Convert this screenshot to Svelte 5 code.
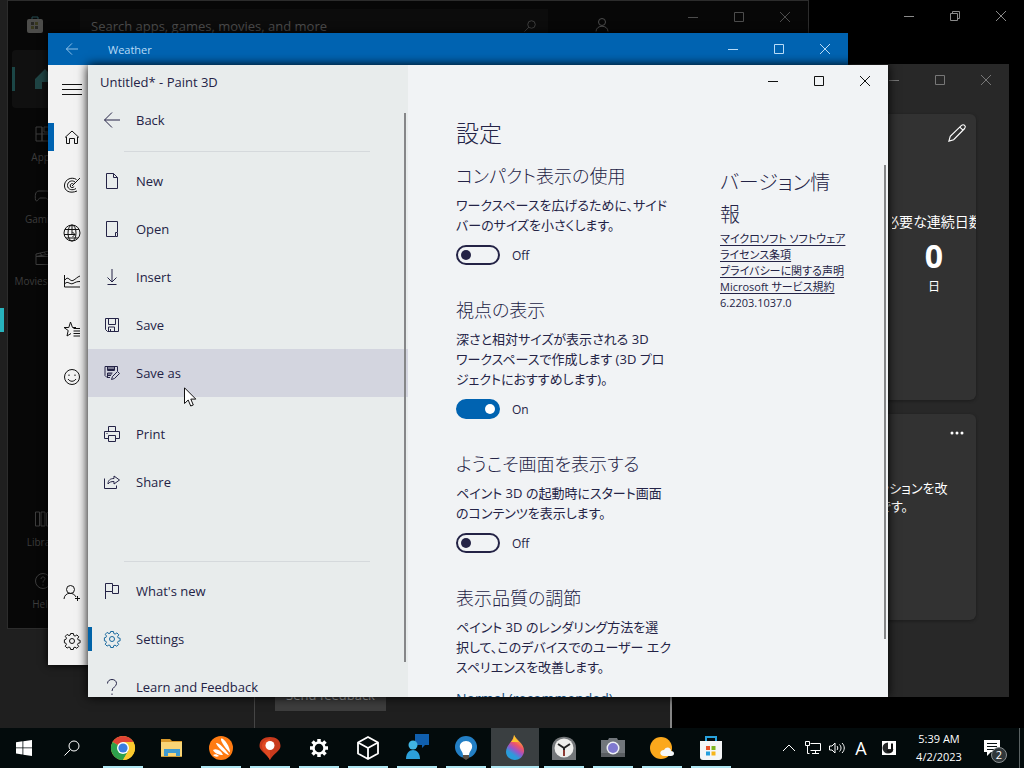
<script lang="ts">
    // line icons, drawn on a 16 x 16 grid unless noted
    const icons: Record<string, string> = {
        min: '<path d="M3 8.5h10"/>',
        max: '<path d="M3.5 3.5h9v9h-9z"/>',
        restore: '<path d="M3.500 5.500h7v7h-7zM5.500 5.500v-2h7v7h-2"/>',
        close: '<path d="M3 3l10 10M13 3L3 13"/>',
        back: '<path d="M0.500 8H16M8 0.500L0.500 8L8 15.500"/>',
        doc: '<path d="M2.500 .5h7l4 4v11h-11zM9.500 .5v4h4"/>',
        open: '<path d="M13.500 11V.5h-11v15h9M11.500 15.500v-4h2v4z"/>',
        insert: '<path d="M8 0v13M3.500 8.500L8 13l4.500-4.500M3.500 15.500h9"/>',
        save: '<path d="M1.500 1.500h13v13h-11l-2-2zM4.500 1.500v6h7v-6M4.500 14v-4h6v4M6.500 14v-2"/>',
        saveAs: '<path d="M6 12.500H3l-2-2v-9h12.500V6M3.500 1.500v4h7v-4M3.500 12V8h5"/><path d="M4 3h6M4 4.500h6M4 9h4M4 10.500h3"/><path d="M7.500 14.500l1-3 5-5 2 2-5 5z"/>',
        print: '<path d="M4.500 5.500v-5h7v5M4 12.500H.5v-7h15v7H12M4.500 9.500h7v6h-7zM2.500 7.500h1"/>',
        share: '<path d="M.5 4.500v10h12v-3M4 10c0-4 2.500-5.500 6-5.500V2l5.500 4L10 10V7.500C7 7.500 5.500 8 4 10z"/>',
        flag: '<path d="M1.500 16V.5h7v8h-7M8.500 2.500h6v8h-6v-2"/>',
        gear: '<circle cx="8" cy="8" r="2.500"/><path d="M6.600 .5h2.800l.4 2 1.300.6 1.800-1.200 1.900 1.900-1.200 1.800.6 1.300 1.900.4v2.500l-2 .5-.6 1.300 1.200 1.800-1.900 1.900-1.800-1.200-1.300.6-.4 1.800H6.600l-.4-1.900-1.300-.6-1.800 1.100-1.900-1.900 1.200-1.700-.5-1.300-1.500-.4V6.800l1.500-.4.6-1.300-1.200-1.800 1.800-1.900 1.900 1.200 1.200-.6z"/>',
        help: '<path d="M3.500 4.500C3.500 2 5.500.5 8 .5s4.500 1.500 4.500 4C12.500 8 8 8 8 12M8 14.500V16"/>',
        menu: '<path d="M-2 3.500h20M-2 8.500h20M-2 13.500h20"/>',
        home: '<path d="M1 8.500L8 2l7 6.500M2.500 8v6.500h3v-5h5v5h3V8"/>',
        radar: '<path d="M12.500 2.500C8 -.5 1 2 .5 8s5.500 9 12.500 6M11 5C8 2.500 3.500 4.500 3.500 8.500c0 4 5 5.500 8.500 3M9.500 7C8 5.800 6 7 6.200 9c.3 2 2.800 2 4 .5M8 9l8-8"/>',
        globe: '<circle cx="8" cy="8" r="8"/><ellipse cx="8" cy="8" rx="4" ry="8"/><path d="M1 4.500h14M0 9.500h11M2 13h12M8 0v9M8.500 7l2.500 2.500L8.500 12"/>',
        chart: '<path d="M.5 2v12H16M1 7c3-5 5 2 8 .5S13 4 16 3M1 10.500c3-3 5 1.500 8 0s4-2 7-2"/>',
        fav: '<path d="M7 12.500L3 15l1.200-5.500L0 6.500h4.800L6.500 1l2 5.500H12M9.500 7.500H16M9.500 10H16M9.500 12.500H16M9.500 15H16"/>',
        smile: '<circle cx="8" cy="8" r="7.500"/><path d="M4 10c2 3 6 3 8 0M5 5.500v1.500M11 5.500v1.500"/>',
        person: '<circle cx="6.500" cy="4.500" r="4"/><path d="M0 14c.5-7 9.500-7.500 12 -2M13.500 11v5M11 13.500h5"/>',
        user: '<circle cx="8" cy="5" r="3.500"/><path d="M2 14.500c0-7 12-7 12 0"/>',
        search: '<circle cx="10" cy="6" r="5"/><path d="M6.500 9.500L.5 15.500"/>',
        apps: '<path d="M1 1h6v14H1zM7 1v14M1 8h14V15H7M9 1h6v5H9z"/>',
        game: '<path d="M4 3h8c4 0 4 5 3.500 9-2 3-3-2-4.500-2H5c-1.500 0-2.500 5-4.500 2C0 8 0 3 4 3z"/>',
        movie: '<path d="M1 6.500h14v8H1zM1 6.500V4l13-3 .5 3L1 6.500M5 3l1.500 2M9 2l1.500 2"/>',
        library: '<path d="M.5 1h4v14h-4zM6 1h4v14H6zM11.500 2l3-1v14h-3z"/>',
        helpRound: '<circle cx="8" cy="8" r="7.500"/><path d="M6 6c0-3 4.500-2.500 4 0-.3 1.500-2 1.500-2 3.500M8 11.500v1"/>',
        pencil: '<path d="M.8 15.200L2 11 12 1.200c2-1.500 4.500.8 2.800 2.800L5 14zM10.500 2.700l2.800 2.800"/>',
        chevron: '<path d="M2 11l6-6 6 6"/>',
        network: '<path d="M5.500 3.500h10v7h-10M.5 1.500h4v4h-4zM2.500 5.500v8h2M10.500 10.500v3M7 13.500h7"/>',
        volume: '<path d="M.5 6v4h2.500l3 3V3L3 6zM8 6c1 1 1 3 0 4M10.500 4.500c2 2 2 5 0 7M13 3c3 3 3 7 0 10"/>',
        ime: '<rect x="1" y="1" width="14" height="14" fill="#fff" stroke="none"/><circle cx="7" cy="8" r="5.500" fill="#26292a" stroke="none"/><path d="M7 2h8v7H7z" fill="#fff" stroke="none"/><path d="M11 3.500v6c0 3-4 3-4.500 .5" stroke="#111" stroke-width="2"/>',
    }

    // coloured taskbar icons, 24 x 24
    const appIcons: Record<string, string> = {
        chrome: '<circle cx="12" cy="12" r="12" fill="#fbc92e"/><path d="M12 12L1.600 6a12 12 0 0 1 20.800 0z" fill="#df4335"/><path d="M12 12L1.600 6A12 12 0 0 0 12 24l5.200-9z" fill="#2da14c"/><path d="M12 6h10.400A12 12 0 0 1 12 24l5.200-9z" fill="#fbc92e"/><circle cx="12" cy="12" r="6" fill="#fff"/><circle cx="12" cy="12" r="4.600" fill="#3a7de0"/>',
        folder: '<path d="M1 3h9l2 2h10v5H1z" fill="#d99a2b"/><path d="M1 6h21v14H1z" fill="#f9d576"/><path d="M4 20v-7h16v7h-4v-3H8v3z" fill="#3f9bd0"/><path d="M1 20h21v1H1z" fill="#c99b38"/>',
        avast: '<circle cx="12" cy="12" r="12" fill="#ff7b12"/><path d="M12 2.500c3-1 9 8 9 14-2-1-10-11-9-14z" fill="#fff"/><path d="M7 7c2-1 9 5 13 12-3 0-12-8-13-12z" fill="#fff"/><path d="M4 14c3-2 8 0 10 5-4 0-9-2-10-5z" fill="#fff"/><path d="M4 19c2-1 4-1 6 1-2 1-4 1-6-1z" fill="#fff"/>',
        pin: '<path d="M12 24C8 17 1.500 15 1.500 10 1.500 4 6 1 12 1s10.500 3 10.500 9C22.500 15 16 17 12 24z" fill="#c83a1d"/><path d="M12 24C10 19 4 16 4 10c0-3 3-7 8-7z" fill="#e04922"/><circle cx="12" cy="9.500" r="4.500" fill="#fff"/>',
        cog: '<circle cx="12" cy="12" r="5.500" fill="none" stroke="#fff" stroke-width="2.500"/><path d="M12 6V3M12 18v3M6 12H3M18 12h3M7.800 7.800L5.500 5.500M16.200 16.200l2.300 2.300M7.800 16.200l-2.300 2.300M16.200 7.800l2.300-2.300" stroke="#fff" stroke-width="3.500"/>',
        cube: '<path d="M12 1l10 5.500v11L12 23 2 17.500v-11zM2 6.500l10 5.500 10-5.500M12 12v11" fill="none" stroke="#fff" stroke-width="1.800" stroke-linejoin="round"/>',
        feedback: '<path d="M10-2h14V9h-4l-3 3V9h-7z" fill="#105fae"/><circle cx="8" cy="9" r="4.500" fill="#41b5e4"/><path d="M1 23c0-12 14-12 14 0z" fill="#2ca0da"/>',
        bulb: '<circle cx="12" cy="11" r="11" fill="#237fc5"/><path d="M12 5c-4 0-7 3-6 7 .5 2 3 4 3 7h6c0-3 2.500-5 3-7 1-4-2-7-6-7z" fill="#fff"/><path d="M9 19h6v3l-3 2-3-2z" fill="#5b5147"/>',
        paint: '<defs><linearGradient id="drop" x1="0.800" y1="0" x2="0.300" y2="1"><stop offset="0.150" stop-color="#ffb62e"/><stop offset="0.400" stop-color="#ef5268"/><stop offset="0.600" stop-color="#9a55c9"/><stop offset="0.800" stop-color="#2a9cdb"/></linearGradient></defs><path d="M11-1c3 6 11 9 10 17-1 5-5 8-9 8s-9-3-9-8C3 9 10 6 11-1z" fill="url(#drop)"/><path d="M11-1c1 3 3 5 5 7L8 6c2-2 3-4 3-7z" fill="#fac52d"/>',
        clock: '<path d="M0 24V12C0-3 24-3 24 12v12z" fill="#74777a"/><circle cx="12" cy="12" r="9.500" fill="#eeeeec"/><path d="M12 12L6 8M12 12l6-4M12 12v3" stroke="#222" stroke-width="2"/><path d="M12 14v6" stroke="#8d3a34" stroke-width="2"/>',
        camera: '<path d="M2 4h5l1-2h8l1 2h7v17H0V4z" fill="#71767b"/><path d="M0 17h24v4H0z" fill="#5a5e62"/><circle cx="12" cy="12" r="6.500" fill="#eef0f5"/><circle cx="12" cy="12" r="5" fill="#8079cf"/>',
        weather: '<circle cx="11" cy="12" r="11" fill="#fba81c"/><path d="M14 20c-5 0-5-6 0-6 2-4 7-3 7 1 4 0 4 5 0 5z" fill="#f5f7f9"/>',
        store: '<path d="M7 6V1h10v5" fill="none" stroke="#28a2dd" stroke-width="2"/><path d="M1 5h22v16q0 3-3 3H4q-3 0-3-3z" fill="#f4f6f7"/><path d="M7 10h4v4H7z" fill="#e8532c"/><path d="M12.500 10h4v4h-4z" fill="#7db51f"/><path d="M7 15.500h4v4H7z" fill="#259fdd"/><path d="M12.500 15.500h4v4h-4z" fill="#f7b61a"/>',
    }

    const taskbar = [
        { name: 'Chrome', icon: 'chrome', running: true },
        { name: 'File Explorer', icon: 'folder', running: false },
        { name: 'Avast', icon: 'avast', running: true },
        { name: 'Maps', icon: 'pin', running: true },
        { name: 'Settings', icon: 'cog', running: true },
        { name: '3D Viewer', icon: 'cube', running: true },
        { name: 'Feedback Hub', icon: 'feedback', running: true },
        { name: 'Tips', icon: 'bulb', running: true },
        { name: 'Paint 3D', icon: 'paint', running: true },
        { name: 'Clock', icon: 'clock', running: true },
        { name: 'Camera', icon: 'camera', running: true },
        { name: 'Weather', icon: 'weather', running: true },
        { name: 'Microsoft Store', icon: 'store', running: true },
    ]

    const menuGroups = [
        [{ label: 'Back', icon: 'back' }],
        [
            { label: 'New', icon: 'doc' },
            { label: 'Open', icon: 'open' },
            { label: 'Insert', icon: 'insert' },
            { label: 'Save', icon: 'save' },
            { label: 'Save as', icon: 'saveAs' },
        ],
        [
            { label: 'Print', icon: 'print' },
            { label: 'Share', icon: 'share' },
        ],
        [
            { label: "What's new", icon: 'flag' },
            { label: 'Settings', icon: 'gear' },
            { label: 'Learn and Feedback', icon: 'help' },
        ],
    ]

    let options = $state([
        {
            title: 'コンパクト表示の使用',
            lines: ['ワークスペースを広げるために、サイド', 'バーのサイズを小さくします。'],
            on: false,
        },
        {
            title: '視点の表示',
            lines: ['深さと相対サイズが表示される 3D', 'ワークスペースで作成します (3D プロ', 'ジェクトにおすすめします)。'],
            on: true,
        },
        {
            title: 'ようこそ画面を表示する',
            lines: ['ペイント 3D の起動時にスタート画面', 'のコンテンツを表示します。'],
            on: false,
        },
    ])

    const storeTop = [
        { label: 'Apps', icon: 'apps' },
        { label: 'Gaming', icon: 'game' },
        { label: 'Movies & TV', icon: 'movie' },
    ]
    const storeBottom = [
        { label: 'Library', icon: 'library' },
        { label: 'Help', icon: 'helpRound' },
    ]
    const weatherTop = ['menu', 'home', 'radar', 'globe', 'chart', 'fav', 'smile']
    const weatherBottom = ['person', 'gear']
</script>

{#snippet icon(name: string, size = 16)}
    <svg class="icon" width={size} height={size} viewBox="0 0 16 16" aria-hidden="true">{@html icons[name]}</svg>
{/snippet}

{#snippet controls(middle = 'max')}
    <div class="controls">
        <button aria-label="Minimize">{@render icon('min')}</button>
        <button aria-label="Maximize">{@render icon(middle)}</button>
        <button aria-label="Close">{@render icon('close')}</button>
    </div>
{/snippet}

{#snippet storeItem(item: { label: string, icon: string })}
    <button class="store-item">
        {@render icon(item.icon)}
        <span>{item.label}</span>
    </button>
{/snippet}

<div class="screen">
    <main class="desktop">
        <section class="window hub" aria-label="Feedback Hub">
            <div class="hub-nav"></div>
            <div class="hub-pane">
                <button class="send">Send feedback</button>
            </div>
            <div class="hub-rest">{@render controls('restore')}</div>
        </section>

        <section class="window store" aria-label="Microsoft Store">
            <header>
                <svg class="store-logo" width="18" height="18" viewBox="0 0 18 18">
                    <path d="M6 3V1h6v2" fill="none" stroke="#244a50" />
                    <rect x="1" y="3" width="16" height="14" rx="2" fill="#4c4c4a" />
                    <path d="M5 6h3v3H5zM9 10h3v3H9z" fill="#272724" />
                    <path d="M9 6h3v3H9zM5 10h3v3H5z" fill="#39391e" />
                </svg>
                <label class="store-search">
                    <input type="text" aria-label="Search" placeholder="Search apps, games, movies, and more" />
                    {@render icon('search', 12)}
                </label>
                <button class="account" aria-label="Account">{@render icon('user')}</button>
                {@render controls()}
            </header>
            <nav>
                <button class="store-home" aria-label="Home">
                    <svg width="20" height="20" viewBox="0 0 20 20"><path d="M0 10L10 0l10 10v10h-7v-7H7v7H0z" fill="#1f4444" /></svg>
                </button>
                {#each storeTop as item}
                    {@render storeItem(item)}
                {/each}
                <div class="grow"></div>
                {#each storeBottom as item}
                    {@render storeItem(item)}
                {/each}
            </nav>
        </section>

        <section class="window habit" aria-label="Clock">
            {@render controls()}
            <div class="card tall">
                <button class="corner" aria-label="Edit">{@render icon('pencil', 18)}</button>
                <div class="streak">
                    <div class="clip"><span>必要な連続日数</span></div>
                    <strong>0</strong>
                    <span>日</span>
                </div>
            </div>
            <div class="card">
                <button class="corner" aria-label="More">
                    <svg width="14" height="4" viewBox="0 0 14 4"><circle cx="2" cy="2" r="1.500" /><circle cx="7" cy="2" r="1.500" /><circle cx="12" cy="2" r="1.500" /></svg>
                </button>
                <p>ッションを改<br />です。</p>
            </div>
        </section>

        <section class="window weather" aria-label="Weather">
            <header>
                <button class="weather-back" aria-label="Back">{@render icon('back', 12)}</button>
                <span class="weather-title">Weather</span>
                {@render controls()}
            </header>
            <nav>
                {#each weatherTop as name}
                    <button class={{ current: name === 'home' }} aria-label={name}>{@render icon(name)}</button>
                {/each}
                <div class="grow"></div>
                {#each weatherBottom as name}
                    <button aria-label={name}>{@render icon(name)}</button>
                {/each}
            </nav>
        </section>

        <section class="window paint" aria-label="Paint 3D">
            <aside>
                <div class="paint-title">Untitled* - Paint 3D</div>
                <nav>
                    {#each menuGroups as group, i}
                        <div class={['group', `group-${i}`]}>
                            {#each group as item}
                                <button class={['item', { hover: item.label === 'Save as', selected: item.label === 'Settings' }]}>
                                    {@render icon(item.icon)}
                                    {item.label}
                                </button>
                            {/each}
                        </div>
                    {/each}
                </nav>
                <div class="thumb side-thumb"></div>
            </aside>
            <div class="page">
                {@render controls()}
                <div class="columns">
                    <div class="options">
                        <h1>設定</h1>
                        {#each options as option}
                            <section>
                                <h2>{option.title}</h2>
                                <p>{#each option.lines as line, i}{#if i}<br />{/if}{line}{/each}</p>
                                <label class="toggle">
                                    <input type="checkbox" role="switch" bind:checked={option.on} />
                                    {option.on ? 'On' : 'Off'}
                                </label>
                            </section>
                        {/each}
                        <section>
                            <h2>表示品質の調節</h2>
                            <p>ペイント 3D のレンダリング方法を選<br />択して、このデバイスでのユーザー エク<br />スペリエンスを改善します。</p>
                            <button class="quality">Normal (recommended)</button>
                        </section>
                    </div>
                    <div class="about">
                        <h2>バージョン情<br />報</h2>
                        <a href="#license">マイクロソフト ソフトウェア<br />ライセンス条項</a>
                        <a href="#privacy">プライバシーに関する声明</a>
                        <a href="#terms">Microsoft サービス規約</a>
                        <span>6.2203.1037.0</span>
                    </div>
                </div>
                <div class="thumb page-thumb"></div>
            </div>
        </section>

        <svg class="cursor" width="13" height="20" viewBox="0 0 13 20">
            <path d="M.5 .8v15.700l3.700-3.500 2.500 6 2.600-1-2.500-5.900h5z" fill="#fff" stroke="#111" />
        </svg>
    </main>

    <footer class="taskbar">
        <button aria-label="Start">
            <svg width="16" height="16" viewBox="0 0 16 16"><path d="M0 2.300l6.500-1v6.200H0zM7.300 1.200L16 0v7.500H7.300zM0 8.300h6.500v6.300l-6.500-1zM7.300 8.300H16V16l-8.700-1.300z" fill="#fff" /></svg>
        </button>
        <button class="find" aria-label="Search">{@render icon('search')}</button>
        {#each taskbar as app}
            <button class={['app', { running: app.running, active: app.icon === 'paint' }]} aria-label={app.name}>
                <svg class="app-icon" width="24" height="24" viewBox="0 0 24 24">{@html appIcons[app.icon]}</svg>
            </button>
        {/each}
        <div class="tray">
            <button aria-label="Hidden icons">{@render icon('chevron')}</button>
            <button aria-label="Network">{@render icon('network')}</button>
            <button aria-label="Volume">{@render icon('volume')}</button>
            <button class="lang">A</button>
            <button class="ime" aria-label="Input mode">{@render icon('ime')}</button>
            <button class="time"><span>5:39 AM</span><span>4/2/2023</span></button>
            <button class="notes" aria-label="Notifications">
                <svg width="16" height="16" viewBox="0 0 16 16"><path d="M0 0h16v12H7l-4 4v-4H0z" fill="#fff" /><path d="M3 3.500h10M3 6.500h10M3 9.500h7" stroke="#061011" /></svg>
                <span class="badge">2</span>
            </button>
            <div class="peek"></div>
        </div>
    </footer>
</div>

<style>
    :global(body) {
        margin: 0;
        background: #000;
    }

    .screen {
        display: flex;
        flex-direction: column;
        height: 100vh;
        min-height: 480px;
        overflow: hidden;
        font-family: "Open Sans", "Noto Sans CJK JP", sans-serif;
        font-feature-settings: "palt";
        font-size: 13px;
        color: #fff;
    }

    button, input {
        font: inherit;
        font-feature-settings: inherit;
        color: inherit;
        background: none;
        border: 0;
        padding: 0;
        margin: 0;
    }

    button {
        display: flex;
        align-items: center;
        justify-content: center;
    }

    h1, h2 {
        margin: 0;
        font-weight: 300;
    }

    p {
        margin: 0;
    }

    .icon {
        flex: none;
        fill: none;
        stroke: currentColor;
        overflow: visible;
    }

    .grow {
        flex: 1;
    }

    .desktop {
        position: relative;
        flex: 1;
        min-height: 0;
        background: #000;
    }

    .window {
        position: absolute;
        display: flex;
        box-sizing: border-box;
        overflow: hidden;
    }

    .controls {
        display: flex;
        justify-content: flex-end;
        height: 32px;
        margin-left: auto;
    }

    .controls button {
        width: 46px;
        height: 32px;
    }

    /* maximized window behind everything */
    .hub {
        inset: 0;
    }

    .hub-nav {
        width: 255px;
        flex: none;
        box-sizing: border-box;
        background: linear-gradient(#27b3bd, #27b3bd) 0 308px / 4px 24px no-repeat, #1f1f1f;
        border-right: 1px solid #454545;
    }

    .hub-pane {
        display: flex;
        align-items: flex-end;
        flex: 9 1 0;
        box-sizing: border-box;
        padding: 0 0 17px 20px;
        background: #1f1f1f;
        border-right: 2px solid #858585;
    }

    .hub-rest {
        flex: 8 1 0;
        color: #8a8a8a;
    }

    .send {
        width: 111px;
        height: 32px;
        background: #3d3d3d;
        color: #aaa;
    }

    .store {
        inset: 0 215px 99px 7px;
        flex-direction: column;
        background: #070707;
        border: 1px solid #2c2c2c;
        color: #4c4c4c;
    }

    .store header {
        display: flex;
        align-items: flex-start;
        height: 49px;
        flex: none;
    }

    .store-logo {
        margin: 15px 0 0 18px;
    }

    .store-search {
        display: flex;
        align-items: center;
        flex: 0 1 468px;
        height: 34px;
        box-sizing: border-box;
        margin: 8px 0 0 36px;
        padding: 0 12px 0 11px;
        background: #0c0c0c;
    }

    .store-search input {
        flex: 1;
        min-width: 0;
    }

    .store-search input::placeholder {
        color: #4c4c4c;
    }

    .account {
        margin: 16px 0 0 46px;
    }

    .store nav {
        display: flex;
        flex: 1;
        flex-direction: column;
        width: 70px;
        padding-bottom: 5px;
        font-size: 10px;
        color: #3c3c3c;
    }

    .store-home {
        width: 66px;
        height: 58px;
        margin: 0 0 6px 4px;
        border-radius: 4px;
        background: linear-gradient(#1b4646, #1b4646) 0 50% / 3px 24px no-repeat, #101010;
    }

    .store-item {
        flex-direction: column;
        gap: 8px;
        height: 62px;
        white-space: nowrap;
    }

    .habit {
        inset: 64px 15px 31px 209px;
        flex-direction: column;
        background: #282828;
        color: #fff;
    }

    .habit .controls {
        height: 50px;
        flex: none;
        color: #777;
    }

    .card {
        align-self: flex-end;
        position: relative;
        width: 300px;
        flex: 0 1 206px;
        margin: 0 33px 14px 0;
        border-radius: 6px;
        background: #323232;
        box-shadow: 0 1px 3px #1c1c1c;
    }

    .card.tall {
        flex-basis: 286px;
    }

    .corner {
        position: absolute;
        top: 10px;
        right: 10px;
        width: 18px;
        height: 18px;
        fill: #fff;
    }

    .streak {
        display: flex;
        flex-direction: column;
        align-items: center;
        width: 84px;
        margin: 97px 0 0 auto;
    }

    .clip {
        display: flex;
        justify-content: center;
        width: 84px;
        overflow: hidden;
        white-space: nowrap;
        font-size: 14px;
        line-height: 22px;
    }

    .streak strong {
        font-size: 32px;
        line-height: 46px;
    }

    .streak > span {
        font-size: 12px;
        line-height: 16px;
    }

    .card p {
        width: 97px;
        margin: 65px 0 0 auto;
        line-height: 18px;
    }

    .weather {
        inset: 33px 176px 63px 48px;
        flex-direction: column;
        background: #f2f2f2;
        color: #111;
        box-shadow: 0 0 8px #000;
    }

    .weather header {
        display: flex;
        align-items: center;
        height: 32px;
        flex: none;
        background: #0063b1;
        color: #b9dcf7;
        font-size: 11px;
    }

    .weather-back {
        width: 48px;
    }

    .weather-title {
        margin-left: 12px;
    }

    .weather nav {
        display: flex;
        flex: 1;
        flex-direction: column;
        width: 48px;
    }

    .weather nav button {
        height: 48px;
    }

    .current {
        background: linear-gradient(#0063b1, #0063b1) 0 50% / 6px 28px no-repeat;
    }

    .paint {
        inset: 65px 136px 31px 88px;
        background: #f1f3f5;
        color: #242346;
        box-shadow: 0 0 10px #000;
    }

    aside {
        position: relative;
        width: 320px;
        flex: none;
        background: #e8ecec;
    }

    .paint-title {
        height: 31px;
        padding-left: 12px;
        line-height: 34px;
    }

    .item {
        justify-content: flex-start;
        gap: 16px;
        width: 100%;
        height: 48px;
        padding-left: 16px;
    }

    .group + .group {
        padding-top: 13px;
    }

    .group-1, .group-3 {
        background: linear-gradient(#d5d9dc, #d5d9dc) 36px 7px / 246px 1px no-repeat;
    }

    .group-3 {
        margin-top: 48px;
    }

    .hover {
        background: #d3d5df;
    }

    .selected {
        background: linear-gradient(#0063a8, #0063a8) 0 50% / 4px 24px no-repeat;
    }

    .selected .icon {
        color: #17689e;
    }

    .thumb {
        position: absolute;
        right: 2px;
        width: 2px;
        background: #858688;
    }

    .side-thumb {
        top: 48px;
        bottom: 35px;
    }

    .page-thumb {
        top: 100px;
        bottom: 58px;
    }

    .page {
        position: relative;
        flex: 1;
        min-width: 0;
    }

    .page .controls {
        color: #111;
    }

    .columns {
        display: flex;
        gap: 48px;
        padding: 20px 0 0 48px;
        white-space: nowrap;
    }

    .options {
        width: 216px;
        flex: none;
    }

    .options h1 {
        font-size: 23px;
        line-height: 32px;
        margin-bottom: 15px;
    }

    .options h2 {
        font-size: 18px;
        line-height: 24px;
        margin-bottom: 7px;
    }

    .options p {
        line-height: 20px;
        margin-bottom: 10px;
    }

    .options section {
        margin-bottom: 33px;
    }

    .toggle {
        display: flex;
        align-items: center;
        gap: 12px;
        height: 20px;
        font-size: 12px;
    }

    .toggle input {
        appearance: none;
        display: flex;
        align-items: center;
        width: 44px;
        height: 20px;
        box-sizing: border-box;
        padding: 0 3px;
        border: 2px solid #242346;
        border-radius: 10px;
    }

    .toggle input::before {
        content: "";
        width: 10px;
        height: 10px;
        border-radius: 50%;
        background: #242346;
    }

    .toggle input:checked {
        justify-content: flex-end;
        border-color: #0063b1;
        background: #0063b1;
    }

    .toggle input:checked::before {
        background: #fff;
    }

    .quality {
        color: #17507e;
        font-size: 14px;
        line-height: 24px;
    }

    .about {
        display: flex;
        flex-direction: column;
        align-items: flex-start;
        padding-top: 50px;
        font-size: 11px;
        line-height: 16px;
    }

    .about h2 {
        font-size: 20px;
        line-height: 32px;
    }

    .about a {
        color: inherit;
        text-underline-offset: 2px;
    }

    .cursor {
        position: absolute;
        left: 184px;
        top: 387px;
    }

    .taskbar {
        display: flex;
        height: 40px;
        flex: none;
        background: #030b0c;
    }

    .taskbar > button {
        width: 48px;
        height: 40px;
        box-sizing: border-box;
        flex: none;
    }

    .taskbar .find {
        margin-right: 3px;
    }

    .taskbar .app {
        margin-right: 1px;
    }

    .app-icon {
        overflow: visible;
    }

    .running {
        background: linear-gradient(#aee6f2, #aee6f2) 50% 100% / 40px 2px no-repeat;
    }

    .active {
        background: linear-gradient(#aee6f2, #aee6f2) 50% 100% / 48px 2px no-repeat, #3a3f41;
    }

    .tray {
        display: flex;
        margin-left: auto;
    }

    .tray button {
        width: 24px;
    }

    .tray .lang {
        font-size: 18px;
    }

    .tray .ime {
        margin: 0 8px 0 4px;
    }

    .tray .time {
        flex-direction: column;
        width: 60px;
        font-size: 11px;
        line-height: 18px;
    }

    .tray .notes {
        position: relative;
        width: 46px;
        margin-right: 4px;
    }

    .badge {
        position: absolute;
        left: 22px;
        top: 19px;
        width: 14px;
        height: 14px;
        border: 1px solid #8a8f90;
        border-radius: 50%;
        background: #30373a;
        font-size: 11px;
        line-height: 14px;
        text-align: center;
    }

    .peek {
        width: 4px;
        border-left: 1px solid #5a6263;
    }
</style>
